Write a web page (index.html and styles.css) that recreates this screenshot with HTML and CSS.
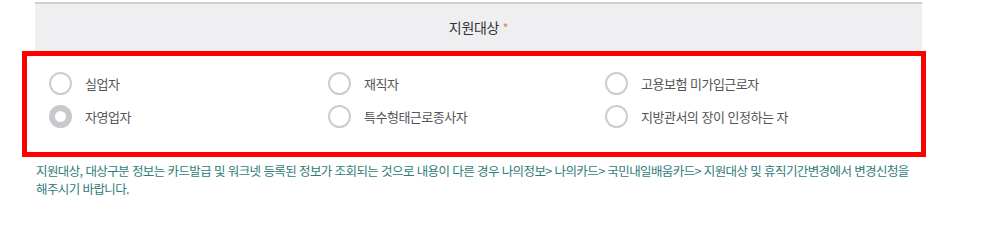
FILE: index.html
```html
<!DOCTYPE html>
<html lang="ko">
<head>
<meta charset="UTF-8">
<meta name="viewport" content="width=device-width, initial-scale=1.0">
<title>지원대상</title>
<link rel="stylesheet" href="styles.css">
</head>
<body>

<div class="container">
  <div class="field-head">지원대상 <span class="req">*</span></div>

  <div class="field-body">
    <ul class="radio-list">
      <li><span class="radio"></span>실업자</li>
      <li><span class="radio"></span>재직자</li>
      <li><span class="radio"></span>고용보험 미가입근로자</li>
      <li><span class="radio checked"></span>자영업자</li>
      <li><span class="radio"></span>특수형태근로종사자</li>
      <li><span class="radio"></span>지방관서의 장이 인정하는 자</li>
    </ul>
    <div class="highlight"></div>
  </div>

  <p class="notice">지원대상, 대상구분 정보는 카드발급 및 워크넷 등록된 정보가 조회되는 것으로 내용이 다른 경우 나의정보&gt; 나의카드&gt; 국민내일배움카드&gt; 지원대상 및 휴직기간변경에서 변경신청을 해주시기 바랍니다.</p>
</div>

</body>
</html>
```

FILE: styles.css
```css
body {
  margin: 0;
  padding: 0;
  background-color: #fff;
  font-family: "Noto Sans CJK KR", "Noto Sans", sans-serif;
  color: #555;
}
.container {
  width: 887px;
  margin-left: 35px;
  padding-top: 2px;
}
.field-head {
  height: 47px;
  line-height: 47px;
  border-top: 2px solid #cfcfd2;
  background-color: #efeff2;
  text-align: center;
  font-size: 14px;
  color: #333;
  letter-spacing: -0.3px;
}
.req {
  color: #e0803a;
  font-size: 12px;
}
.field-body {
  position: relative;
  padding: 16px 0 24px 14px;
}
.radio-list {
  display: grid;
  grid-template-columns: 279px 277px 1fr;
  grid-auto-rows: 33px;
  margin: 0;
  padding: 0;
  list-style: none;
}
.radio-list li {
  display: flex;
  align-items: center;
  gap: 13px;
  font-size: 13px;
  letter-spacing: -0.5px;
}
.radio {
  width: 19px;
  height: 19px;
  border: 2px solid #cdcdd1;
  border-radius: 50%;
  background-color: #fff;
}
.radio.checked {
  width: 11px;
  height: 11px;
  border: 6px solid #c9c9cd;
}
.highlight {
  position: absolute;
  top: 0;
  left: -13px;
  right: -4px;
  bottom: 0;
  border: 5px solid #ff0000;
}
.notice {
  margin: 5px 0 0 1px;
  font-size: 12.5px;
  line-height: 18px;
  color: #2e7c78;
  letter-spacing: -0.6px;
  word-break: keep-all;
}
```
